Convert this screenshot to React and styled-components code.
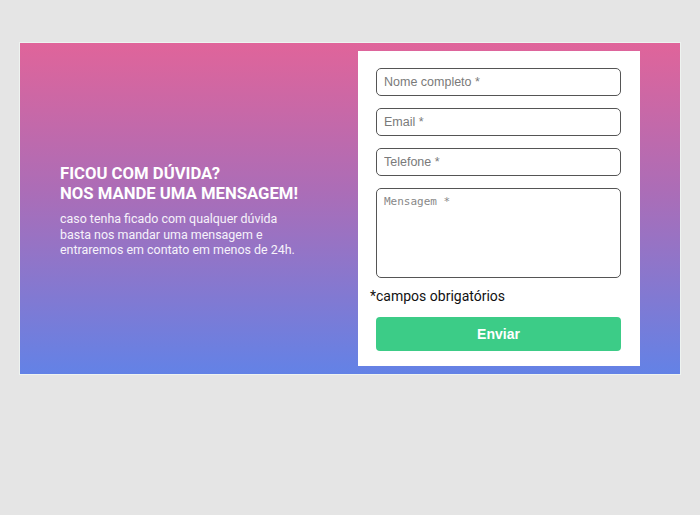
import React from "react"
import styled, { createGlobalStyle } from "styled-components"

const GlobalStyle = createGlobalStyle`
  body {
    margin: 0;
    background: #e5e5e5;
    font-family: Roboto, "Liberation Sans", sans-serif;
  }
`

const Page = styled.div`
  padding: 42px 19px 0;
`

const Banner = styled.section`
  display: flex;
  align-items: center;
  justify-content: space-between;
  height: 333px;
  box-sizing: border-box;
  border: 1px solid #eef3f0;
  background: linear-gradient(180deg, #e0649a 0%, #ab6db7 45%, #6382e6 100%);
  padding: 0 40px 0 40px;
`

const TextBlock = styled.div`
  color: #fff;
  width: 260px;
  margin-top: 5px;
`

const Title = styled.h2`
  margin: 0 0 7px;
  font-size: 16.7px;
  line-height: 20px;
  font-weight: 700;
  text-transform: uppercase;
  white-space: nowrap;
`

const Description = styled.p`
  margin: 0;
  max-width: 238px;
  font-size: 12.45px;
  line-height: 15.7px;
  color: #f6f2fa;
`

const Card = styled.form`
  display: flex;
  flex-direction: column;
  width: 282px;
  box-sizing: border-box;
  background: #fff;
  padding: 17px 19px 15px 18px;
`

const Field = styled.input`
  height: 28px;
  box-sizing: border-box;
  border: 1px solid #555;
  border-radius: 5px;
  padding: 0 7px;
  margin-bottom: 12px;
  font-family: "Liberation Sans", Arial, sans-serif;
  font-size: 12.5px;

  &::placeholder {
    color: #7a7a7a;
  }
`

const Message = styled.textarea`
  height: 90px;
  box-sizing: border-box;
  border: 1px solid #555;
  border-radius: 5px;
  padding: 6px 7px;
  resize: none;
  font-family: "DejaVu Sans Mono", monospace;
  font-size: 11px;

  &::placeholder {
    color: #888;
  }
`

const Note = styled.span`
  margin: 9px 0 12px -6px;
  font-size: 14px;
  line-height: 18px;
  color: #111;
`

const SubmitButton = styled.button`
  height: 34px;
  border: none;
  border-radius: 4px;
  background: #3ccc87;
  color: #fff;
  font-family: "Liberation Sans", Arial, sans-serif;
  font-size: 14px;
  font-weight: 700;
`

const App = () => (
  <Page>
    <GlobalStyle />
    <Banner>
      <TextBlock>
        <Title>
          Ficou com dúvida?
          <br />
          Nos mande uma mensagem!
        </Title>
        <Description>
          caso tenha ficado com qualquer dúvida basta nos mandar uma mensagem e
          entraremos em contato em menos de 24h.
        </Description>
      </TextBlock>
      <Card onSubmit={(e) => e.preventDefault()}>
        <Field type="text" placeholder="Nome completo *" />
        <Field type="email" placeholder="Email *" />
        <Field type="tel" placeholder="Telefone *" />
        <Message placeholder="Mensagem *" />
        <Note>*campos obrigatórios</Note>
        <SubmitButton type="submit">Enviar</SubmitButton>
      </Card>
    </Banner>
  </Page>
)

export default App
